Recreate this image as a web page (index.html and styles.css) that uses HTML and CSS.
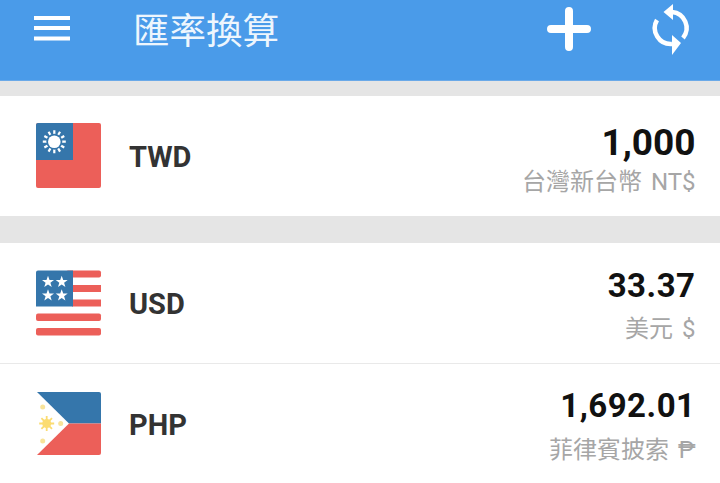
FILE: index.html
```html
<!DOCTYPE html>
<html lang="zh-Hant">
<head>
<meta charset="utf-8">
<title>匯率換算</title>
<link rel="stylesheet" href="styles.css">
</head>
<body>
<header class="bar">
  <svg class="menu" width="36" height="26" viewBox="0 0 36 26"><path d="M0 2h36M0 12h36M0 22.500h36" stroke="#fff" stroke-width="4"/></svg>
  <h1 class="title">匯率換算</h1>
  <svg class="plus" width="44" height="44" viewBox="0 0 44 44"><path d="M22 4v36M4 22h36" stroke="#fff" stroke-width="8" stroke-linecap="round"/></svg>
  <svg class="sync" width="40" height="52" viewBox="0 0 40 52">
    <path d="M20 9A16 16 0 0 1 31 35" fill="none" stroke="#fff" stroke-width="4.500"/>
    <path d="M21 1V17L11.500 9Z" fill="#fff"/>
    <path d="M5 17A16 16 0 0 0 20 41" fill="none" stroke="#fff" stroke-width="4.500"/>
    <path d="M20 32V52L29 40Z" fill="#fff"/>
  </svg>
</header>
<main class="list">
  <section class="row row-first">
    <svg class="flag" width="66" height="66" viewBox="0 0 66 66">
      <rect x="0" y="0" width="65" height="65" rx="2" fill="#ec5f59"/>
      <path d="M2 0H37V37H0V2A2 2 0 0 1 2 0Z" fill="#3576ab"/>
      <path d="M18.300 7.200V30.200M6.800 18.700H29.800M8.340 12.950L28.260 24.450M8.340 24.450L28.260 12.950M12.550 8.740L24.050 28.660M24.050 8.740L12.550 28.660" stroke="#fff" stroke-width="2.200"/>
      <circle cx="18.300" cy="18.700" r="8" fill="#3576ab"/>
      <circle cx="18.300" cy="18.700" r="6.300" fill="#fff"/>
    </svg>
    <div class="code">TWD</div>
    <div class="value">
      <div class="amount amount-big">1,000</div>
      <div class="name">台灣新台幣 NT$</div>
    </div>
  </section>
  <section class="row row-second">
    <svg class="flag" width="66" height="66" viewBox="0 0 66 66">
      <defs>
        <path id="star" d="M0-6.300L1.500-2.100 6-2 2.400.8 3.700 5 0 2.500-3.700 5-2.400.8-6-2-1.500-2.100Z" fill="#fff"/>
      </defs>
      <g fill="#ec5f59">
        <rect x="30" y="0.500" width="35" height="7" rx="2"/>
        <rect x="36" y="15" width="29" height="7"/>
        <rect x="36" y="29.500" width="29" height="7"/>
        <rect x="0" y="43.500" width="65" height="7.500" rx="2"/>
        <rect x="0" y="58" width="65" height="7.500" rx="2"/>
      </g>
      <path d="M2 0.500H37V36.500H0V2.500A2 2 0 0 1 2 0.500Z" fill="#3576ab"/>
      <use href="#star" x="12" y="12"/>
      <use href="#star" x="25.700" y="12"/>
      <use href="#star" x="12" y="25.500"/>
      <use href="#star" x="25.700" y="25.500"/>
    </svg>
    <div class="code">USD</div>
    <div class="value">
      <div class="amount">33.37</div>
      <div class="name">美元 $</div>
    </div>
  </section>
  <section class="row row-third">
    <svg class="flag" width="66" height="66" viewBox="0 0 66 66">
      <path d="M1 1H63A2 2 0 0 1 65 3V32.500H33Z" fill="#3576ab"/>
      <path d="M33 32.500H65V62A2 2 0 0 1 63 64H1Z" fill="#ec5f59"/>
      <path d="M10.700 25V40M3.200 32.500H18.200M5.400 27.200L16 37.800M16 27.200L5.400 37.800" stroke="#fbdc72" stroke-width="1.800"/>
      <circle cx="10.700" cy="32.500" r="4.500" fill="#fbdc72"/>
      <g fill="#f8e39a"><circle cx="6.700" cy="16" r="2.500"/><circle cx="6.700" cy="50" r="2.500"/><circle cx="24.700" cy="32.500" r="2.500"/></g>
    </svg>
    <div class="code">PHP</div>
    <div class="value">
      <div class="amount">1,692.01</div>
      <div class="name">菲律賓披索 ₱</div>
    </div>
  </section>
</main>
</body>
</html>
```
FILE: styles.css
```css
* { box-sizing: border-box; }
html, body { margin: 0; padding: 0; }
body {
  width: 720px;
  height: 483px;
  overflow: hidden;
  background: #e5e5e5;
  font-family: Roboto, "Noto Sans CJK TC", sans-serif;
}
.bar {
  height: 81px;
  background: #4a9be9;
  border-bottom: 1px solid #6aa9e8;
  display: flex;
  align-items: flex-start;
  color: #fff;
}
.menu { margin: 16px 0 0 34px; flex: none; }
.title {
  margin: 5px 0 0 63px;
  font: 400 36.500px/48px "Noto Sans CJK TC", sans-serif;
  color: #eef6fd;
}
.plus { margin: 7px 0 0 auto; flex: none; }
.sync { margin: 3px 28px 0 61px; flex: none; }
.list { display: flex; flex-direction: column; padding-top: 15px; }
.row {
  background: #fff;
  display: flex;
  align-items: center;
  padding: 0 24.5px 0 36px;
  height: 120px;
}
.row-second { margin-top: 27px; border-bottom: 1px solid #e9e9e9; height: 121px; }
.flag { flex: none; }
.code {
  margin-left: 27px;
  padding-top: 2px;
  font-size: 29px;
  font-weight: 700;
  color: #333;
}
.value { margin-left: auto; text-align: right; }
.amount {
  font-size: 33px;
  line-height: 40px;
  font-weight: 700;
  color: #111;
  letter-spacing: 0.5px;
}
.amount-big { font-size: 37px; letter-spacing: 0; }
.name {
  font-size: 24px;
  line-height: 34px;
  color: #a6a6a6;
  word-spacing: 3px;
}
.row-first .value { padding-top: 10px; }
.row-first .name { margin-top: 2px; }
.row-second .value { padding-top: 6px; }
.row-second .name { margin-top: 6px; }
.row-third .value { padding-top: 5px; }
.row-third .name { margin-top: 7px; }
```
